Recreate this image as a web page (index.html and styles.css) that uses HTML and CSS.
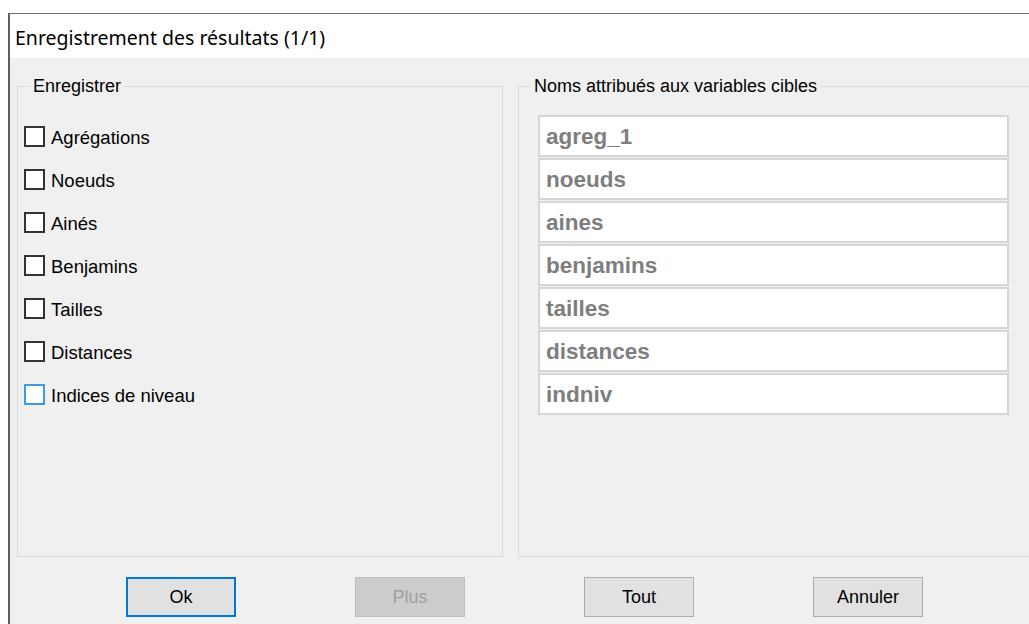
FILE: index.html
```html
<!DOCTYPE html>
<html lang="fr">
<head>
<meta charset="utf-8">
<title>Enregistrement des résultats</title>
<link rel="stylesheet" href="styles.css">
</head>
<body>
<div class="window">
  <div class="titlebar">Enregistrement des résultats (1/1)</div>
  <div class="client">
    <div class="groups">
      <fieldset class="group group-save">
        <legend>Enregistrer</legend>
        <div class="checks">
          <label class="check"><span class="box"></span><span class="check-text">Agrégations</span></label>
          <label class="check"><span class="box"></span><span class="check-text">Noeuds</span></label>
          <label class="check"><span class="box"></span><span class="check-text">Ainés</span></label>
          <label class="check"><span class="box"></span><span class="check-text">Benjamins</span></label>
          <label class="check"><span class="box"></span><span class="check-text">Tailles</span></label>
          <label class="check"><span class="box"></span><span class="check-text">Distances</span></label>
          <label class="check"><span class="box box-focus"></span><span class="check-text">Indices de niveau</span></label>
        </div>
      </fieldset>
      <fieldset class="group group-names">
        <legend>Noms attribués aux variables cibles</legend>
        <div class="fields">
          <div class="field">agreg_1</div>
          <div class="field">noeuds</div>
          <div class="field">aines</div>
          <div class="field">benjamins</div>
          <div class="field">tailles</div>
          <div class="field">distances</div>
          <div class="field">indniv</div>
        </div>
      </fieldset>
    </div>
    <div class="buttons">
      <button class="btn btn-default">Ok</button>
      <button class="btn" disabled>Plus</button>
      <button class="btn">Tout</button>
      <button class="btn">Annuler</button>
    </div>
  </div>
</div>
</body>
</html>
```

FILE: styles.css
```css
html, body {
  margin: 0;
  padding: 0;
  background: #ffffff;
  overflow: hidden;
}

.window {
  margin: 13px 0 0 8px;
  height: 611px;
  border-top: 1px solid #6e6e6e;
  border-left: 2px solid #5e5e5e;
  display: flex;
  flex-direction: column;
  overflow: hidden;
}

.titlebar {
  height: 44px;
  flex: none;
  box-sizing: border-box;
  padding: 3px 0 0 5px;
  background: #ffffff;
  font-family: "Noto Sans", "Open Sans", sans-serif;
  font-size: 19.5px;
  line-height: 41px;
  color: #000000;
  white-space: nowrap;
}

.client {
  flex: 1;
  background: #f0f0f0;
  padding: 18px 0 0 7px;
  font-family: "Liberation Sans", Arial, sans-serif;
  font-size: 18px;
  color: #000000;
}

.groups {
  display: flex;
  gap: 15px;
  width: 1100px;
}

.group {
  margin: 0;
  padding: 0;
  border: 1px solid #dcdcdc;
  height: 481px;
  box-sizing: border-box;
  min-width: 0;
}

.group legend {
  margin-left: 12px;
  padding: 0 3px;
  line-height: 20px;
  font-size: 18px;
}

.group-save {
  width: 486px;
  flex: none;
}

.group-names {
  width: 530px;
  flex: none;
}

.checks {
  display: flex;
  flex-direction: column;
  gap: 22px;
  padding: 30px 0 0 6px;
}

.check {
  display: flex;
  align-items: flex-start;
  gap: 6px;
  height: 21px;
  white-space: nowrap;
}

.check-text {
  font-size: 18.5px;
  line-height: 21px;
  padding-top: 1px;
}

.box {
  width: 21px;
  height: 21px;
  box-sizing: border-box;
  border: 2px solid #333333;
  background: #ffffff;
  flex: none;
}

.box-focus {
  border-color: #3c9be6;
}

.fields {
  display: flex;
  flex-direction: column;
  gap: 1px;
  padding: 19px 0 0 19px;
}

.field {
  width: 471px;
  height: 42px;
  box-sizing: border-box;
  border: 2px solid #d6d6d6;
  background: #ffffff;
  padding: 2px 0 0 6px;
  font-weight: bold;
  font-size: 22.5px;
  line-height: 36px;
  color: #7e7e7e;
}

.buttons {
  display: flex;
  gap: 119px;
  padding: 20px 0 0 109px;
}

.btn {
  width: 110px;
  height: 40px;
  box-sizing: border-box;
  border: 1px solid #adadad;
  background: #e1e1e1;
  font-family: "Liberation Sans", Arial, sans-serif;
  font-size: 18px;
  color: #000000;
  padding: 0;
  margin: 0;
}

.btn-default {
  border: 2px solid #0078d7;
}

.btn:disabled {
  background: #cccccc;
  border-color: #bfbfbf;
  color: #a0a0a0;
}
```
